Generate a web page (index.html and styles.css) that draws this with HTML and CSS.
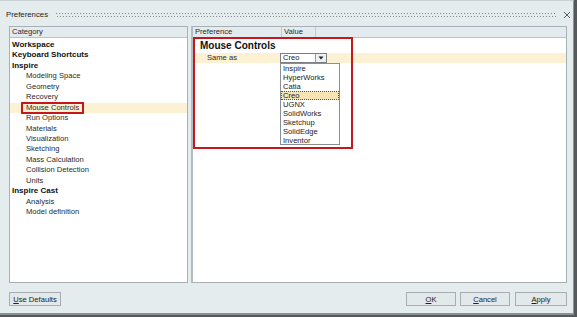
FILE: index.html
```html
<!DOCTYPE html>
<html>
<head>
<meta charset="utf-8">
<title>Preferences</title>
<link rel="stylesheet" href="styles.css">
</head>
<body>
<div class="window">
  <div class="titlebar">
    <span class="title">Preferences</span>
    <div class="gripper"></div>
    <svg class="close" width="8" height="8" viewBox="0 0 8 8"><path d="M1 1L7 7M7 1L1 7" stroke="#4a5053" stroke-width="0.9" fill="none"/></svg>
  </div>
  <div class="main">
    <div class="panel left">
      <div class="header"><div class="hcell">Category</div></div>
      <ul class="tree">
        <li class="top">Workspace</li>
        <li class="top">Keyboard Shortcuts</li>
        <li class="top">Inspire</li>
        <li class="child">Modeling Space</li>
        <li class="child">Geometry</li>
        <li class="child">Recovery</li>
        <li class="child selected"><span class="marked">Mouse Controls</span></li>
        <li class="child">Run Options</li>
        <li class="child">Materials</li>
        <li class="child">Visualization</li>
        <li class="child">Sketching</li>
        <li class="child">Mass Calculation</li>
        <li class="child">Collision Detection</li>
        <li class="child">Units</li>
        <li class="top">Inspire Cast</li>
        <li class="child">Analysis</li>
        <li class="child">Model definition</li>
      </ul>
    </div>
    <div class="panel right">
      <div class="header">
        <div class="hcell pref">Preference</div>
        <div class="hcell val">Value</div>
      </div>
      <div class="body">
        <div class="redbox"></div>
        <div class="group">Mouse Controls</div>
        <div class="row">
          <div class="label">Same as</div>
          <div class="combo">
            <span class="combo-text">Creo</span>
            <span class="combo-btn"><svg width="6" height="4" viewBox="0 0 6 4"><path d="M0.5 0.5H5.5L3 3.5Z" fill="#222"/></svg></span>
            <ul class="dropdown">
              <li>Inspire</li>
              <li>HyperWorks</li>
              <li>Catia</li>
              <li class="current">Creo</li>
              <li>UGNX</li>
              <li>SolidWorks</li>
              <li>Sketchup</li>
              <li>SolidEdge</li>
              <li>Inventor</li>
            </ul>
          </div>
        </div>
      </div>
    </div>
  </div>
  <div class="footer">
    <button class="btn wide"><u>U</u>se Defaults</button>
    <div class="spacer"></div>
    <button class="btn"><u>O</u>K</button>
    <button class="btn"><u>C</u>ancel</button>
    <button class="btn wide"><u>A</u>pply</button>
  </div>
</div>
</body>
</html>
```

FILE: styles.css
```css
* { box-sizing: border-box; }
html, body { margin: 0; padding: 0; }
body {
  background: #55595c;
  width: 577px;
  height: 317px;
  overflow: hidden;
  font-family: "Liberation Sans", Arial, sans-serif;
  color: #1c1c1c;
}
.window {
  width: 574px;
  height: 315px;
  background: #e5ecee;
  border-top: 1px solid #c9d1d5;
  border-right: 1px solid #8d9599;
  border-bottom: 2px solid #8a9195;
  display: flex;
  flex-direction: column;
}
.titlebar {
  height: 25px;
  display: flex;
  align-items: center;
  padding: 2px 0 0 6px;
}
.title { font-size: 7.8px; color: #222; }
.gripper {
  flex: 1;
  height: 4px;
  margin: 0 7px 0 8px;
  background:
    linear-gradient(90deg, #7e8588 1px, transparent 1px) 0 0 / 3px 1px repeat-x,
    linear-gradient(90deg, #7e8588 1px, transparent 1px) 1px 3px / 3px 1px repeat-x;
}
.close { margin-right: 2px; }
.main {
  height: 257px;
  display: flex;
  padding: 0 6px 0 9px;
  gap: 3px;
}
.panel {
  background: #fff;
  border: 1px solid #a7b0b5;
  display: flex;
  flex-direction: column;
  position: relative;
}
.left { width: 179px; }
.right { flex: 1; border-left: 2px solid #b5bcc0; }
.header {
  height: 11px;
  background: #e4ebee;
  border-bottom: 1px solid #b9c2c6;
  display: flex;
}
.hcell {
  font-size: 7.6px;
  line-height: 10px;
  padding-left: 2px;
  color: #2a2a2a;
}
.pref { width: 89px; border-right: 1px solid #c2cacd; }
.val { width: 34px; border-right: 1px solid #c2cacd; }
.tree {
  list-style: none;
  margin: 0;
  padding: 2px 0 0 0;
}
.tree li {
  height: 10.45px;
  line-height: 10.45px;
  white-space: nowrap;
}
.tree .top { font-weight: bold; font-size: 8px; padding-left: 2px; color: #111; }
.tree .child { font-size: 7.6px; padding-left: 16px; color: #2a2a2a; }
.tree .selected { background: #fdf1d4; }
.marked {
  display: inline-block;
  height: 8px;
  line-height: 8px;
  padding: 0 3px;
  margin-left: -3px;
  outline: 2px solid #c8161d;
}
.body { position: relative; flex: 1; }
.redbox {
  position: absolute;
  left: 0px;
  top: -1px;
  width: 160px;
  height: 112px;
  border: 2px solid #c8161d;
  z-index: 3;
  pointer-events: none;
}
.group {
  height: 14px;
  padding: 2px 0 0 7px;
  font-weight: bold;
  font-size: 10px;
  line-height: 12px;
  color: #111;
}
.row {
  margin: 1px 0 0 2px;
  height: 10px;
  background: #fdf1d4;
  display: flex;
}
.label {
  width: 85px;
  padding-left: 12px;
  font-size: 7.6px;
  line-height: 10px;
  color: #2a2a2a;
}
.combo {
  position: relative;
  width: 47px;
  height: 10px;
  background: #fff;
  border: 1px solid #7c7f82;
  display: flex;
}
.combo-text {
  flex: 1;
  font-size: 7.6px;
  line-height: 8px;
  padding-left: 2px;
}
.combo-btn {
  width: 11px;
  border-left: 1px solid #9a9ea1;
  background: #eef1f2;
  display: flex;
  align-items: center;
  justify-content: center;
}
.dropdown {
  position: absolute;
  left: -1px;
  top: 9px;
  width: 60px;
  height: 82px;
  margin: 0;
  padding: 0;
  list-style: none;
  background: #fff;
  border: 1px solid #8b8f92;
  z-index: 2;
}
.dropdown li {
  height: 9px;
  line-height: 9px;
  font-size: 7.6px;
  padding-left: 2px;
  color: #222;
}
.dropdown .current {
  background: #f6e4b4;
  outline: 1px dotted #555;
  outline-offset: -1px;
}
.footer {
  display: flex;
  align-items: flex-start;
  padding: 9px 6px 0 9px;
  gap: 4px;
}
.spacer { flex: 1; }
.btn {
  width: 50px;
  height: 14px;
  padding: 0;
  font-family: "Liberation Sans", Arial, sans-serif;
  font-size: 7.6px;
  color: #222;
  background: #e3e8ea;
  border: 1px solid #a6aeb2;
  border-radius: 0;
}
.btn.wide { width: 52px; }
.btn + .btn.wide { margin-left: 1px; }
```
